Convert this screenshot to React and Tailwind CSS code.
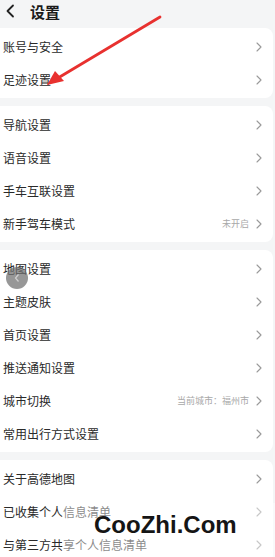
import React from 'react';

const groups = [
  [{ label: '账号与安全' }, { label: '足迹设置' }],
  [
    { label: '导航设置' },
    { label: '语音设置' },
    { label: '手车互联设置' },
    { label: '新手驾车模式', value: '未开启' },
  ],
  [
    { label: '地图设置' },
    { label: '主题皮肤' },
    { label: '首页设置' },
    { label: '推送通知设置' },
    { label: '城市切换', value: '当前城市：福州市' },
    { label: '常用出行方式设置' },
  ],
  [
    { label: '关于高德地图' },
    { label: '已收集个人信息清单' },
    { label: '与第三方共享个人信息清单' },
  ],
];

function Chevron() {
  return (
    <svg width="6" height="10" viewBox="0 0 6 10" className="shrink-0">
      <path d="M1 1l4 4-4 4" fill="none" stroke="#9a9a9a" strokeWidth="1.1" strokeLinecap="round" strokeLinejoin="round" />
    </svg>
  );
}

export default function App() {
  return (
    <div
      className="relative w-[275px] h-[557px] overflow-hidden bg-[#f4f5f6]"
      style={{ fontFamily: '"Noto Sans CJK SC", "Noto Sans", sans-serif' }}
    >
      {/* 顶部 */}
      <div className="flex items-center h-[22px] pl-[5px]">
        <svg width="10" height="14" viewBox="0 0 10 14">
          <path d="M8 1.5L2.5 7 8 12.5" fill="none" stroke="#222" strokeWidth="1.8" strokeLinecap="round" strokeLinejoin="round" />
        </svg>
        <span className="ml-[15px] text-[15px] font-bold text-[#1a1a1a] leading-none">设置</span>
      </div>

      <div className="flex flex-col gap-[8px] mt-[6px]">
        {groups.map((g, gi) => (
          <div key={gi} className="bg-white rounded-r-[8px] w-[279px] -ml-[6px] py-[2px]">
            {g.map((item) => (
              <div key={item.label} className="flex items-center h-[33px] pl-[9px] pr-[11px]">
                <span className="flex-1 text-[12px] text-[#2a2a2a] leading-none">{item.label}</span>
                {item.value && (
                  <span className="text-[9px] text-[#a8a8a8] mr-[7px] leading-none">{item.value}</span>
                )}
                <Chevron />
              </div>
            ))}
          </div>
        ))}
      </div>

      {/* 红色箭头 */}
      <svg className="absolute left-0 top-0 pointer-events-none" width="275" height="557">
        <path d="M160 17 L58 78" stroke="#e8312f" strokeWidth="2.8" strokeLinecap="round" />
        <path d="M47 85 L55 71 L64 81 Z" fill="#e8312f" />
      </svg>

      {/* 悬浮返回按钮 */}
      <div className="absolute left-[6px] top-[267px] w-[22px] h-[22px] rounded-full bg-[#6b6b6b]/70 flex items-center justify-center">
        <svg width="8" height="10" viewBox="0 0 8 10">
          <path d="M5.5 1.5L2.5 5l3 3.5" fill="none" stroke="#cfcfcf" strokeWidth="1.2" />
        </svg>
      </div>

      {/* 水印 */}
      <div className="absolute left-[62px] top-[503px] w-[213px] h-[54px] bg-white/45" />
      <div
        className="absolute left-[94px] top-[513px] text-[24px] font-bold text-[#151515] leading-none"
        style={{ fontFamily: '"Liberation Sans", Arial, sans-serif' }}
      >
        CooZhi.Com
      </div>
    </div>
  );
}
